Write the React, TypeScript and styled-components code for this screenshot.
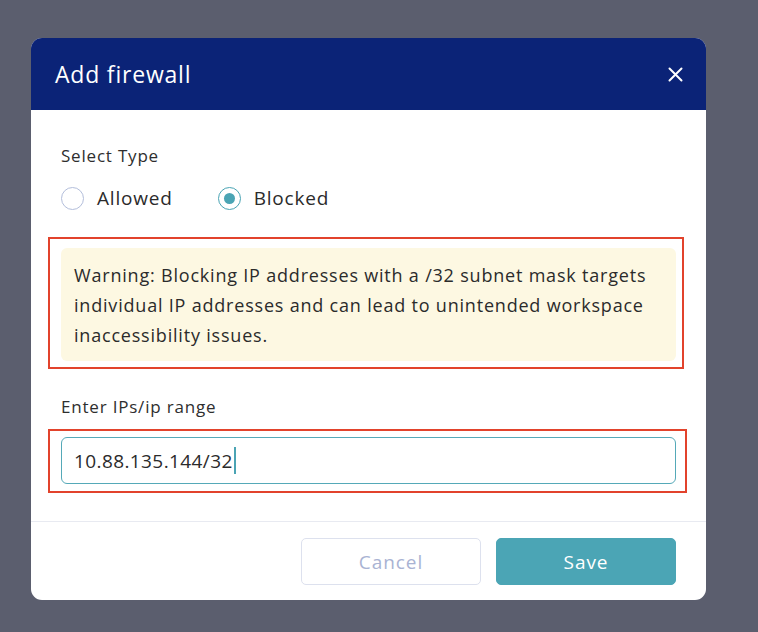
import { useState } from "react";
import styled, { createGlobalStyle } from "styled-components";

const GlobalStyle = createGlobalStyle`
  * { box-sizing: border-box; }
  body {
    margin: 0;
    background: #5b5e6e;
    font-family: "Open Sans", "Liberation Sans", sans-serif;
    letter-spacing: 0.05em;
  }
`;

const Backdrop = styled.div`
  min-height: 100vh;
  padding: 38px 0 0 31px;
`;

const Modal = styled.div`
  width: 675px;
  background: #fff;
  border-radius: 11px;
  overflow: hidden;
`;

const Header = styled.div`
  height: 72px;
  background: #0b2377;
  display: flex;
  align-items: center;
  justify-content: space-between;
  padding: 0 22px 0 24px;
  h2 {
    margin: 0;
    font-size: 23px;
    font-weight: 400;
    color: #fff;
  }
`;

const CloseButton = styled.button`
  border: none;
  background: none;
  padding: 0;
  width: 18px;
  height: 18px;
  display: flex;
  align-items: center;
  justify-content: center;
  cursor: pointer;
`;

const Body = styled.div`
  padding: 35px 30px 37px;
  border-bottom: 1px solid #e8eaf1;
`;

const Label = styled.div`
  font-size: 17px;
  line-height: 22px;
  color: #2e2e2e;
`;

const RadioRow = styled.div`
  display: flex;
  gap: 45px;
  margin-top: 20px;
`;

const RadioOption = styled.label`
  display: flex;
  align-items: center;
  gap: 13px;
  font-size: 19px;
  line-height: 23px;
  color: #2b2b2b;
  cursor: pointer;
`;

const RadioCircle = styled.span<{ $checked: boolean }>`
  width: 23px;
  height: 23px;
  border-radius: 50%;
  border: 1px solid ${(p) => (p.$checked ? "#4aa4b4" : "#b3bedb")};
  display: flex;
  align-items: center;
  justify-content: center;
  &::after {
    content: "";
    width: 11px;
    height: 11px;
    border-radius: 50%;
    background: #4aa4b4;
    display: ${(p) => (p.$checked ? "block" : "none")};
  }
`;

const Highlight = styled.div<{
  $gap: number;
  $top: number;
  $right: number;
  $bottom: number;
}>`
  position: relative;
  margin-top: ${(p) => p.$gap}px;
  &::after {
    content: "";
    position: absolute;
    top: -${(p) => p.$top}px;
    left: -13px;
    right: -${(p) => p.$right}px;
    bottom: -${(p) => p.$bottom}px;
    border: 2px solid #e2432c;
    pointer-events: none;
  }
`;

const WarningBox = styled.div`
  background: #fdf8e2;
  border-radius: 6px;
  padding: 12px 13px 11px;
  font-size: 18px;
  line-height: 30px;
  color: #2b2b2b;
`;

const FieldLabel = styled(Label)`
  margin-top: 35px;
`;

const Input = styled.input`
  display: block;
  width: 100%;
  height: 47px;
  border: 1px solid #55a9b8;
  border-radius: 6px;
  padding: 0 12px;
  font-family: inherit;
  font-size: 19px;
  letter-spacing: 0.4px;
  color: #2b2b2b;
  outline: none;
  caret-color: transparent;
`;

/* invisible copy of the value so the caret sits right after the text */
const CaretMirror = styled.div`
  position: absolute;
  top: 0;
  bottom: 0;
  left: 13px;
  display: flex;
  align-items: center;
  font-size: 19px;
  letter-spacing: 0.4px;
  color: transparent;
  white-space: pre;
  pointer-events: none;
`;

const Caret = styled.span`
  width: 2px;
  height: 27px;
  margin-left: 1px;
  background: #4aa4b4;
`;

const Footer = styled.div`
  display: flex;
  justify-content: flex-end;
  gap: 15px;
  padding: 16px 30px 15px;
`;

const Button = styled.button<{ $primary?: boolean }>`
  width: 180px;
  height: 47px;
  border-radius: 5px;
  font-family: inherit;
  font-size: 19px;
  letter-spacing: 0.05em;
  cursor: pointer;
  border: 1px solid ${(p) => (p.$primary ? "#4ba5b5" : "#dde1ee")};
  background: ${(p) => (p.$primary ? "#4ba5b5" : "#fff")};
  color: ${(p) => (p.$primary ? "#fff" : "#a9b3d3")};
`;

type FirewallType = "allowed" | "blocked";

const App = () => {
  const [type, setType] = useState<FirewallType>("blocked");
  const [ip, setIp] = useState("10.88.135.144/32");

  return (
    <>
      <GlobalStyle />
      <Backdrop>
        <Modal>
          <Header>
            <h2>Add firewall</h2>
            <CloseButton aria-label="Close">
              <svg width="15" height="15" viewBox="0 0 15 15">
                <path
                  d="M1.5 1.5 L13.5 13.5 M13.5 1.5 L1.5 13.5"
                  stroke="#fff"
                  strokeWidth="2"
                  strokeLinecap="round"
                />
              </svg>
            </CloseButton>
          </Header>
          <Body>
            <Label>Select Type</Label>
            <RadioRow>
              <RadioOption onClick={() => setType("allowed")}>
                <RadioCircle $checked={type === "allowed"} />
                Allowed
              </RadioOption>
              <RadioOption onClick={() => setType("blocked")}>
                <RadioCircle $checked={type === "blocked"} />
                Blocked
              </RadioOption>
            </RadioRow>
            <Highlight $gap={38} $top={11} $right={8} $bottom={8}>
              <WarningBox>
                Warning: Blocking IP addresses with a /32 subnet mask targets
                individual IP addresses and can lead to unintended workspace
                inaccessibility issues.
              </WarningBox>
            </Highlight>
            <FieldLabel>Enter IPs/ip range</FieldLabel>
            <Highlight $gap={19} $top={8} $right={11} $bottom={9}>
              <Input value={ip} onChange={(e) => setIp(e.target.value)} />
              <CaretMirror>
                {ip}
                <Caret />
              </CaretMirror>
            </Highlight>
          </Body>
          <Footer>
            <Button>Cancel</Button>
            <Button $primary>Save</Button>
          </Footer>
        </Modal>
      </Backdrop>
    </>
  );
};

export default App;
